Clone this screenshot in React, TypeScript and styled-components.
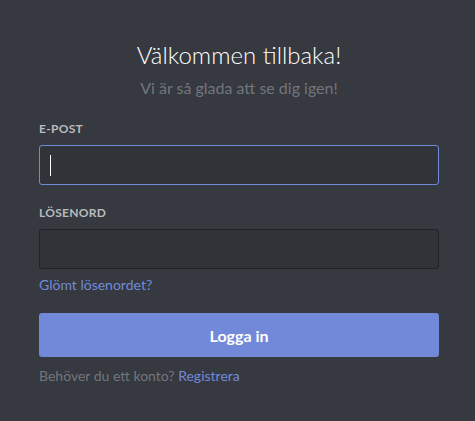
import React from "react";
import styled, { createGlobalStyle } from "styled-components";

const Global = createGlobalStyle`
  html, body { margin: 0; padding: 0; background: #36393f; }
  body { font-family: Lato, "Noto Sans", sans-serif; }
  * { box-sizing: border-box; }
`;

const Page = styled.div`
  width: 475px;
  height: 421px;
  background: #36393f;
  padding: 40px 36px 0 39px;
`;

const Form = styled.form`
  width: 400px;
  display: flex;
  flex-direction: column;
`;

const Title = styled.h1`
  margin: 0;
  font-size: 24px;
  line-height: 30px;
  font-weight: 300;
  color: #ffffff;
  text-align: center;
`;

const Subtitle = styled.div`
  margin-top: 8px;
  font-size: 16px;
  line-height: 20px;
  font-weight: 400;
  color: #72767d;
  text-align: center;
`;

const Label = styled.label<{ $top: number }>`
  display: block;
  margin-top: ${(p) => p.$top}px;
  margin-bottom: 8px;
  font-size: 12px;
  line-height: 16px;
  font-weight: 700;
  letter-spacing: 0.3px;
  text-transform: uppercase;
  color: #b9bbbe;
`;

const FieldWrap = styled.div`
  position: relative;
`;

const Input = styled.input<{ $focused?: boolean }>`
  display: block;
  width: 100%;
  height: 40px;
  padding: 10px;
  border-radius: 3px;
  border: 1px solid ${(p) => (p.$focused ? "#7289da" : "rgba(0,0,0,0.3)")};
  background: rgba(0, 0, 0, 0.1);
  color: #dcddde;
  font-family: inherit;
  font-size: 16px;
  outline: none;
`;

const Caret = styled.span`
  position: absolute;
  left: 11px;
  top: 10px;
  width: 1px;
  height: 21px;
  background: #ffffff;
`;

const Link = styled.a`
  color: #7289da;
  text-decoration: none;
  font-size: 14px;
  line-height: 16px;
`;

const ForgotLink = styled(Link)`
  display: block;
  margin-top: 8px;
`;

const Button = styled.button`
  margin-top: 20px;
  height: 44px;
  width: 100%;
  border: none;
  border-radius: 3px;
  background: #7289da;
  color: #ffffff;
  font-family: inherit;
  font-size: 16px;
  font-weight: 700;
  cursor: pointer;
`;

const Footer = styled.div`
  margin-top: 11px;
  font-size: 14px;
  line-height: 16px;
  color: #72767d;
`;

export default function App() {
  return (
    <>
      <Global />
      <Page>
        <Form onSubmit={(e) => e.preventDefault()}>
          <Title>Välkommen tillbaka!</Title>
          <Subtitle>Vi är så glada att se dig igen!</Subtitle>
          <Label $top={23}>E-post</Label>
          <FieldWrap>
            <Input type="email" $focused />
            <Caret />
          </FieldWrap>
          <Label $top={20}>Lösenord</Label>
          <Input type="password" />
          <ForgotLink href="#">Glömt lösenordet?</ForgotLink>
          <Button type="submit">Logga in</Button>
          <Footer>
            Behöver du ett konto? <Link href="#">Registrera</Link>
          </Footer>
        </Form>
      </Page>
    </>
  );
}
